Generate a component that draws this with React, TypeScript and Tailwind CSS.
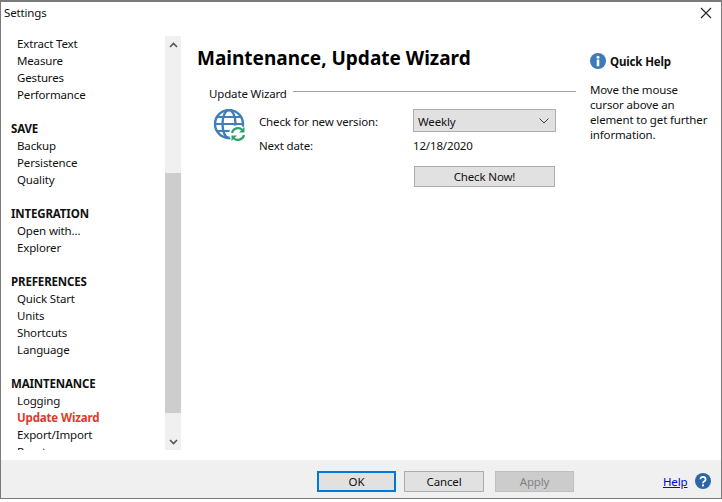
const sections = [
  { title: "", items: ["Extract Text", "Measure", "Gestures", "Performance"] },
  { title: "SAVE", items: ["Backup", "Persistence", "Quality"] },
  { title: "INTEGRATION", items: ["Open with...", "Explorer"] },
  { title: "PREFERENCES", items: ["Quick Start", "Units", "Shortcuts", "Language"] },
  { title: "MAINTENANCE", items: ["Logging", "Update Wizard", "Export/Import", "Reset"] },
];

function GlobeIcon() {
  return (
    <svg width="34" height="34" viewBox="0 0 34 34" fill="none">
      <g stroke="#3f7fbc" strokeWidth="2.4">
        <circle cx="16" cy="15" r="14" />
        <ellipse cx="16" cy="15" rx="6.5" ry="14" />
        <path d="M2 15h28M4 8h24M4 22h24" strokeWidth="2" />
      </g>
      <circle cx="25" cy="25" r="9" fill="#fff" />
      <g stroke="#2ba36f" strokeWidth="2.2" fill="none">
        <path d="M19 24a6.200 6.200 0 0 1 10.500-3" />
        <path d="M31 26a6.200 6.200 0 0 1-10.500 3" />
      </g>
      <path d="M31.500 18v5.500h-5.500z" fill="#2ba36f" />
      <path d="M18.500 32v-5.500h5.500z" fill="#2ba36f" />
    </svg>
  );
}

function InfoIcon() {
  return (
    <svg width="16" height="16" viewBox="0 0 16 16">
      <circle cx="8" cy="8" r="8" fill="#3c7ab8" />
      <circle cx="8" cy="4.2" r="1.5" fill="#fff" />
      <rect x="6.700" y="6.600" width="2.600" height="6.600" fill="#fff" />
    </svg>
  );
}

function HelpIcon() {
  return (
    <svg width="16" height="16" viewBox="0 0 16 16">
      <circle cx="8" cy="8" r="8" fill="#2b67a6" />
      <path d="M5.400 6.200a2.600 2.400 0 1 1 3.900 2.100c-.9.500-1.300.9-1.300 1.900" fill="none" stroke="#fff" strokeWidth="1.800" />
      <rect x="7" y="11.400" width="2" height="2" fill="#fff" />
    </svg>
  );
}

export default function App() {
  return (
    <div className="h-[502px] w-[722px] bg-white font-['Noto_Sans','Open_Sans',sans-serif] text-[11.5px] leading-[17px] tracking-[-0.15px] text-[#111]">
      <div className="flex h-[499px] flex-col border border-t-2 border-[#7a7a7a]">
        <div className="flex h-[34px] shrink-0 items-start justify-between pl-[3px] pr-[9px] pt-[2px]">
          <span>Settings</span>
          <svg width="12" height="12" viewBox="0 0 12 12" className="mt-[3px]" stroke="#222" strokeWidth="1.100">
            <path d="M1 1l10 10M11 1L1 11" />
          </svg>
        </div>

        <div className="flex min-h-0 flex-1">
          <div className="flex h-[414px] w-[180px] shrink-0">
            <div className="h-full w-[164px] overflow-hidden">
              <div className="mt-[-1px]">
                {sections.map((s, i) => (
                  <div key={i} className="mb-[17px]">
                    {s.title && <div className="pl-[10px] font-bold">{s.title}</div>}
                    {s.items.map((item) => (
                      <div key={item} className={item === "Update Wizard" ? "pl-[16px] font-bold text-[#e0392f]" : "pl-[16px]"}>
                        {item}
                      </div>
                    ))}
                  </div>
                ))}
              </div>
            </div>
            <div className="flex h-full w-[16px] flex-col bg-[#f0f0f0]">
              <div className="flex h-[17px] items-center justify-center">
                <svg width="9" height="6" viewBox="0 0 9 6" fill="none" stroke="#555" strokeWidth="1.600"><path d="M1 5l3.500-3.500L8 5" /></svg>
              </div>
              <div className="mt-[120px] h-[240px] bg-[#cdcdcd]" />
              <div className="flex-1" />
              <div className="flex h-[17px] items-center justify-center">
                <svg width="9" height="6" viewBox="0 0 9 6" fill="none" stroke="#555" strokeWidth="1.600"><path d="M1 1l3.500 3.500L8 1" /></svg>
              </div>
            </div>
          </div>

          <div className="w-[395px] shrink-0 pl-[16px]">
            <h1 className="mt-[6px] h-[32px] text-[19px] leading-[32px] font-bold tracking-normal whitespace-nowrap text-black">Maintenance, Update Wizard</h1>
            <div className="mt-[11px] flex items-center pl-[12px]">
              <span className="leading-[17px]">Update Wizard</span>
              <div className="mt-[-4px] ml-[6px] h-px flex-1 bg-[#a0a0a0]" />
            </div>
            <div className="mt-[7px] flex pl-[16px]">
              <div className="w-[46px] shrink-0">
                <GlobeIcon />
              </div>
              <div className="flex-1">
                <div className="flex h-[23px] items-center">
                  <span className="w-[154px] pt-px">Check for new version:</span>
                  <div className="flex h-[23px] w-[143px] items-center justify-between border border-[#adadad] bg-[#e1e1e1] pr-[6px] pl-[4px]">
                    <span className="pt-px">Weekly</span>
                    <svg width="10" height="6" viewBox="0 0 10 6" fill="none" stroke="#444" strokeWidth="1"><path d="M.5.5L5 5 9.500.5" /></svg>
                  </div>
                </div>
                <div className="mt-[5px] flex">
                  <span className="w-[154px]">Next date:</span>
                  <span>12/18/2020</span>
                </div>
                <button className="mt-[12px] ml-[155px] block h-[21px] w-[141px] border border-[#adadad] bg-[#e1e1e1] leading-[17px]">Check Now!</button>
              </div>
            </div>
          </div>

          <div className="flex-1 pl-[14px]">
            <div className="mt-[17px] flex h-[16px] items-center gap-[4px]">
              <InfoIcon />
              <span className="font-bold">Quick Help</span>
            </div>
            <p className="mt-[13px] leading-[15px]">
              Move the mouse<br />cursor above an<br />element to get further<br />information.
            </p>
          </div>
        </div>

        <div className="flex h-[38px] shrink-0 items-start bg-[#f0f0f0] pt-[11px] pl-[316px]">
          <button className="h-[21px] w-[79px] border-2 border-[#0078d7] bg-[#e1e1e1] leading-[15px]">OK</button>
          <button className="ml-[8px] h-[21px] w-[80px] border border-[#adadad] bg-[#e1e1e1]">Cancel</button>
          <button className="ml-[11px] h-[21px] w-[79px] border border-[#bfbfbf] bg-[#cccccc] text-[#838383]">Apply</button>
          <a className="ml-[89px] mt-[2px] text-[#0000ee] underline">Help</a>
          <div className="ml-[8px] mt-[2px]"><HelpIcon /></div>
        </div>
      </div>
    </div>
  );
}
